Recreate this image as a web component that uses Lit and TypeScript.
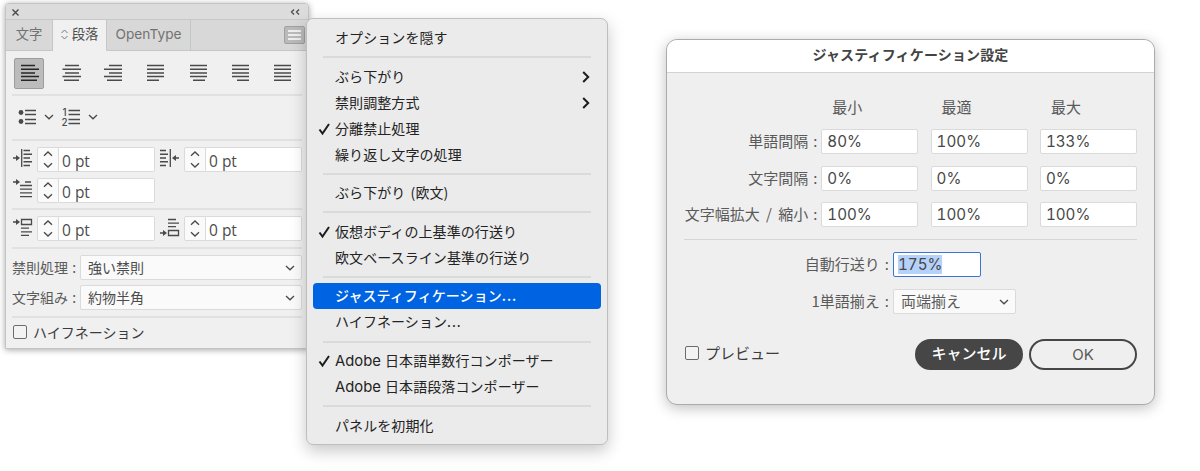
import {html, svg, css, LitElement} from 'lit';
import {customElement, property} from 'lit/decorators.js';
import {classMap} from 'lit/directives/class-map.js';

const shared = css`
  * {
    box-sizing: border-box;
  }

  svg {
    display: block;
    fill: none;
    stroke: #4a4a4a;
    flex: none;
    overflow: visible;
  }

  .head-fill {
    fill: #4a4a4a;
    stroke: none;
  }

  .check {
    width: 14px;
    height: 14px;
    border: 1px solid #6c6c6c;
    border-radius: 2px;
    background: #f3f3f3;
  }

  .select {
    display: flex;
    align-items: center;
    justify-content: space-between;
    height: 25px;
    border: 1px solid #dadada;
    border-radius: 2px;
    background: #fafafa;
    padding: 0 6px 1px 7px;
  }

  .select svg { margin-top: 2px; }
`;

const chevron = html`<svg width="10" height="6" viewBox="0 0 10 6"><path d="M1 1l4 3.8L9 1" stroke-width="1.3"/></svg>`;

// every line is [x1, x2], from top to bottom
const lines = (rows: number[][], top = 1.5, step = 3.7) =>
  rows.map(([a, b], i) => svg`<path d="M${a} ${top + i * step}H${b}"/>`);

const arrow = (y: number) => svg`<path d="M0 ${y}h4"/><path class="head-fill" d="M3 ${y - 3}l4 3-4 3z"/>`;

const ALIGNS = [
  [[1, 15], [1, 19], [1, 15], [1, 19], [1, 17]],
  [[3, 17], [0.5, 19], [3, 17], [0.5, 19], [2, 17]],
  [[5, 18], [0, 18], [5, 18], [0, 18], [3, 18]],
  [[1, 18], [1, 18], [1, 18], [1, 18], [1, 13]],
  [[1, 18], [1, 18], [1, 18], [1, 18], [4, 16]],
  [[1, 18], [1, 18], [1, 18], [1, 18], [6, 18]],
  [[1, 18], [1, 18], [1, 18], [1, 18], [1, 18]],
];

@customElement('w-paragraph-panel')
export class ParagraphPanel extends LitElement {
  static styles = [shared, css`
    :host {
      display: block;
      width: 304px;
      height: 346px;
      background: #f0f0f0;
      border: 1px solid #c4c4c4;
      border-radius: 4px 4px 0 0;
      box-shadow: 0 1px 6px rgba(0,0,0,0.35);
      color: #4c4c4c;
      font: 14px/20px "Noto Sans CJK JP", sans-serif;
      overflow: hidden;
      box-sizing: border-box;
    }

    .title {
      display: flex;
      justify-content: space-between;
      align-items: center;
      height: 15px;
      padding: 1px 8px 0 6px;
      background: #dcdcdc;
    }

    .tabs {
      display: flex;
      height: 32px;
      background: #d8d8d8;
      border-top: 1px solid #c8c8c8;
    }

    .tab {
      display: flex;
      align-items: center;
      justify-content: center;
      padding-bottom: 2px;
      border-right: 1px solid #c6c6c6;
      border-bottom: 1px solid #c6c6c6;
      color: #727272;
      font-size: 13.3px;
    }

    .tab.first { width: 47px; }

    .tab.active {
      width: 54px;
      gap: 4px;
      background: #f0f0f0;
      border-bottom-color: #f0f0f0;
      color: #4c4c4c;
    }

    .tab.active svg { stroke: #777; }

    .tab.latin {
      width: 84px;
      font: 13.7px Inter, sans-serif;
    }

    .tabs .rest {
      flex: 1;
      display: flex;
      justify-content: flex-end;
      padding: 6px 3px 0 0;
      border-bottom: 1px solid #c6c6c6;
    }

    .burger {
      display: flex;
      align-items: center;
      justify-content: center;
      width: 21px;
      height: 18px;
      background: #bababa;
      border: 1px solid #a0a0a0;
      border-radius: 2px;
    }

    .burger svg { stroke: #fff; }

    .body { padding: 7px 6px 0; }

    .aligns {
      display: flex;
      gap: 12.3px;
      padding-left: 2px;
      height: 36px;
    }

    .align {
      display: flex;
      align-items: center;
      justify-content: center;
      width: 30px;
      height: 31px;
      padding-bottom: 2px;
      border: 1px solid transparent;
      border-radius: 2px;
    }

    .align.on {
      background: #bcbcbc;
      border-color: #9c9c9c;
    }

    .align.on svg { stroke: #262626; }

    .line {
      height: 2px;
      margin-bottom: -0.5px;
      background: #e1e1e1;
    }

    .lists {
      display: flex;
      align-items: center;
      gap: 7px;
      height: 43px;
      padding-left: 6px;
    }

    .lists svg:nth-child(3) { margin-left: 1px; }

    .lists text {
      font: 500 9.8px/1 Inter, sans-serif;
      fill: #4a4a4a;
      stroke: none;
    }

    .fields {
      display: grid;
      grid-template-columns: 118px 118px;
      gap: 6px 29px;
      padding: 6.5px 0 5.5px 25px;
    }

    .field {
      display: flex;
      height: 25px;
      margin-left: -25px;
      width: 143px;
    }

    .field .icon {
      width: 25px;
      padding: 1px 0 0 1px;
    }

    .step {
      display: flex;
      align-items: center;
      justify-content: center;
      width: 22px;
      background: #fafafa;
      border: 1px solid #dadada;
      border-radius: 2px 0 0 2px;
    }

    .value {
      flex: 1;
      background: #fff;
      border: 1px solid #dadada;
      border-left: 0;
      border-radius: 0 2px 2px 0;
      padding: 3px 0 0 3px;
      font: 15.5px/20px "Open Sans", sans-serif;
    }

    .selects {
      display: grid;
      grid-template-columns: 68px 1fr;
      row-gap: 5.5px;
      align-items: center;
      padding: 6.5px 0 6px;
    }

    .label {
      color: #5a5a5a;
      padding-bottom: 1px;
      word-spacing: 1px;
      white-space: nowrap;
    }

    .hyphen {
      display: flex;
      align-items: center;
      gap: 6px;
      padding: 5px 1px;
      color: #3c3c3c;
    }

    .hyphen span { margin-top: -1px; }
  `];

  field(icon: unknown) {
    return html`
      <div class="field">
        <div class="icon"><svg width="20" height="20" viewBox="0 0 20 20" stroke-width="1.3">${icon}</svg></div>
        <div class="step"><svg width="10" height="17" viewBox="0 0 10 17" stroke-width="1.3"><path d="M1 4.8L5 1l4 3.8M1 12.2L5 16l4-3.8"/></svg></div>
        <div class="value">0 pt</div>
      </div>
    `;
  }

  render() {
    return html`
      <div class="title">
        <svg width="7" height="7" viewBox="0 0 7 7" stroke-width="1.4"><path d="M.5 .5l6 6M6.5 .5l-6 6"/></svg>
        <svg width="9" height="6" viewBox="0 0 9 6" stroke-width="1.3"><path d="M3 .5L.5 3 3 5.5M8 .5L5.5 3 8 5.5"/></svg>
      </div>
      <div class="tabs">
        <div class="tab first">文字</div>
        <div class="tab active">
          <svg width="7" height="11" viewBox="0 0 7 11" stroke-width="1"><path d="M.5 4L3.5 1l3 3M.5 7l3 3 3-3"/></svg>
          段落
        </div>
        <div class="tab latin">OpenType</div>
        <div class="rest">
          <div class="burger">
            <svg width="13" height="10" viewBox="0 0 13 10" stroke-width="1.3"><path d="M0 1h13M0 5h13M0 9h13"/></svg>
          </div>
        </div>
      </div>
      <div class="body">
        <div class="aligns">
          ${ALIGNS.map((rows, i) => html`
            <div class=${classMap({align: true, on: i === 0})}>
              <svg width="19" height="18" viewBox="0 0 19 18" stroke-width="1.5">${lines(rows)}</svg>
            </div>
          `)}
        </div>
        <div class="line"></div>
        <div class="lists">
          <svg width="19" height="18" viewBox="0 0 19 18" stroke-width="1.4">
            <circle cx="3" cy="4.5" r="2.4" fill="#4a4a4a" stroke="none"/>
            <circle cx="3" cy="13.5" r="2.4" fill="#4a4a4a" stroke="none"/>
            <path d="M7 2.5h11M7 6.5h11M7 11.5h11M7 15.5h11"/>
          </svg>
          ${chevron}
          <svg width="19" height="18" viewBox="0 0 19 18" stroke-width="1.4">
            <text x="0.5" y="7.5">1</text>
            <text x="-0.5" y="17.5">2</text>
            <path d="M6.5 2.5h11.5M6.5 6.5h11.5M6.5 11.5h11.5M6.5 15.5h11.5"/>
          </svg>
          ${chevron}
        </div>
        <div class="line"></div>
        <div class="fields">
          ${this.field(svg`${arrow(10)}<path d="M8.7 1v18"/>${lines([[10.5, 17], [10.5, 19], [10.5, 17], [10.5, 19], [10.5, 17]], 2.5, 3.75)}`)}
          ${this.field(svg`<path d="M19 10h-4M10.3 1v18"/><path class="head-fill" d="M16 7l-4 3 4 3z"/>${lines([[0, 6], [0, 8], [0, 6], [0, 8], [0, 6]], 2.5, 3.75)}`)}
          ${this.field(svg`${arrow(3)}<path d="M12 3h6"/>${lines([[7, 19], [7, 19], [7, 19], [7, 19]], 6.5, 3.7)}`)}
        </div>
        <div class="line"></div>
        <div class="fields">
          ${this.field(svg`${arrow(5)}<path d="M8.5 2.5h10v5h-10z"/>${lines([[8, 16], [8, 19], [8, 16]], 11.2, 3.6)}`)}
          ${this.field(svg`${arrow(16)}<path d="M8.5 13.5h10v5h-10z"/>${lines([[8, 16], [8, 19], [8, 16]], 2.5, 3.6)}`)}
        </div>
        <div class="line"></div>
        <div class="selects">
          <div class="label">禁則処理 :</div>
          <div class="select">強い禁則${chevron}</div>
          <div class="label">文字組み :</div>
          <div class="select">約物半角${chevron}</div>
        </div>
        <div class="line"></div>
        <div class="hyphen"><div class="check"></div><span>ハイフネーション</span></div>
      </div>
    `;
  }
}

interface MenuItem {
  text: string;
  latin?: string;
  checked?: boolean;
  sub?: boolean;
  active?: boolean;
  dots?: boolean;
}

const MENU: MenuItem[][] = [
  [{text: 'オプションを隠す'}],
  [
    {text: 'ぶら下がり', sub: true},
    {text: '禁則調整方式', sub: true},
    {text: '分離禁止処理', checked: true},
    {text: '繰り返し文字の処理'},
  ],
  [{text: 'ぶら下がり (欧文)'}],
  [
    {text: '仮想ボディの上基準の行送り', checked: true},
    {text: '欧文ベースライン基準の行送り'},
  ],
  [
    {text: 'ジャスティフィケーション', dots: true, active: true},
    {text: 'ハイフネーション', dots: true},
  ],
  [
    {latin: 'Adobe', text: '日本語単数行コンポーザー', checked: true},
    {latin: 'Adobe', text: '日本語段落コンポーザー'},
  ],
  [{text: 'パネルを初期化'}],
];

@customElement('w-option-menu')
export class OptionMenu extends LitElement {
  @property({attribute: false}) public groups: MenuItem[][] = MENU;

  static styles = [shared, css`
    :host {
      display: block;
      width: 302px;
      height: 427px;
      padding: 6px;
      background: #ebebeb;
      border: 1px solid #bebebe;
      border-radius: 7px;
      box-shadow: 0 6px 16px rgba(0,0,0,0.22);
      color: #232323;
      font: 14px/24px "Noto Sans CJK JP", sans-serif;
      letter-spacing: 0.08px;
      box-sizing: border-box;
    }

    .group + .group::before {
      content: '';
      display: block;
      height: 2px;
      margin: 5.3px 10px;
      background: #dadada;
    }

    .item {
      display: flex;
      align-items: center;
      height: 26px;
      padding-right: 11px;
      border-radius: 4px;
      white-space: pre;
    }

    .item.active {
      background: #0063e1;
      color: #fff;
      font-weight: 500;
    }

    .mark {
      width: 22px;
      padding-left: 5px;
    }

    .latin {
      font: 14.8px/26px Inter, sans-serif;
      letter-spacing: 0;
      width: 50px;
    }

    .text {
      flex: 1;
      padding-bottom: 2px;
      word-spacing: 2px;
    }

    .dots { letter-spacing: 0.9px; }

    svg { stroke: #1c1c1c; }
  `];

  render() {
    return html`
      ${this.groups.map(group => html`
        <div class="group">
          ${group.map(item => html`
            <div class=${classMap({item: true, active: !!item.active})}>
              <div class="mark">
                ${item.checked ? html`<svg width="13" height="12" viewBox="0 0 13 12" stroke-width="2"><path d="M1.5 6.5l3 4L11 1"/></svg>` : null}
              </div>
              ${item.latin ? html`<div class="latin">${item.latin}</div>` : null}
              <div class="text">${item.text}${item.dots ? html`<span class="dots">...</span>` : null}</div>
              ${item.sub ? html`<svg width="8" height="12" viewBox="0 0 8 12" stroke-width="2"><path d="M1.2 1l5 5-5 5"/></svg>` : null}
            </div>
          `)}
        </div>
      `)}
    `;
  }
}

@customElement('w-justify-dialog')
export class JustifyDialog extends LitElement {
  static styles = [shared, css`
    :host {
      display: block;
      width: 489px;
      height: 366px;
      background: #efefef;
      border: 1px solid #ababab;
      border-radius: 11px;
      box-shadow: 0 3px 14px rgba(0,0,0,0.25);
      color: #5a5a5a;
      font: 15px/23px "Noto Sans CJK JP", sans-serif;
      overflow: hidden;
      box-sizing: border-box;
    }

    .title {
      height: 33px;
      background: #fff;
      border-bottom: 1px solid #d2d2d2;
      color: #434343;
      font-size: 14px;
      font-weight: 700;
      line-height: 29px;
      letter-spacing: 0.15px;
      text-align: center;
    }

    .body { padding: 21px 17px 0; }

    .grid {
      display: grid;
      grid-template-columns: 125px 97px 97px 97px;
      column-gap: 12.3px;
      row-gap: 11.5px;
      padding-bottom: 12px;
    }

    .grid .head {
      height: 23.5px;
      line-height: 25px;
      padding-left: 11px;
    }

    .grid .label { margin-right: -8.5px; }

    .label {
      display: flex;
      justify-content: flex-end;
      gap: 5px;
      white-space: nowrap;
      word-spacing: 3px;
    }

    .input {
      height: 25px;
      border: 1px solid #dadada;
      border-radius: 2px;
      background: #fff;
      color: #474747;
      padding-left: 5px;
      font: 15.2px/24px Inter, sans-serif;
      font-feature-settings: "tnum";
    }

    .input.focus {
      width: 88px;
      border: 1.5px solid #3d72d8;
      padding: 2px 0 0 4px;
      line-height: 19px;
    }

    .input.focus span {
      display: inline-block;
      height: 19px;
      background: #b5d2fb;
    }

    .line {
      height: 1px;
      background: #d6d6d6;
    }

    .rows {
      display: grid;
      grid-template-columns: 205px auto;
      justify-content: start;
      gap: 11.5px 4px;
      padding-top: 12px;
    }

    .rows .select { width: 123px; }

    .foot {
      display: flex;
      align-items: center;
      gap: 6px;
      padding-top: 25px;
    }

    .preview {
      display: flex;
      align-items: center;
      gap: 6px;
      flex: 1;
      padding: 0 0 3px 1px;
      color: #3c3c3c;
    }

    .preview span { margin-top: -1px; }

    .button {
      width: 108px;
      height: 31px;
      border: 2px solid #464646;
      border-radius: 16px;
      text-align: center;
      line-height: 27px;
      font-family: Inter, "Noto Sans CJK JP", sans-serif;
    }

    .button.dark {
      background: #464646;
      color: #fff;
      font-weight: 500;
      line-height: 26px;
    }
  `];

  rows = [
    {name: '単語間隔', values: ['80%', '100%', '133%']},
    {name: '文字間隔', values: ['0%', '0%', '0%']},
    {name: '文字幅拡大 / 縮小', values: ['100%', '100%', '100%']},
  ];

  render() {
    return html`
      <div class="title">ジャスティフィケーション設定</div>
      <div class="body">
        <div class="grid">
          <div></div>
          <div class="head">最小</div>
          <div class="head">最適</div>
          <div class="head">最大</div>
          ${this.rows.map(row => html`
            <div class="label"><span>${row.name}</span><span>:</span></div>
            ${row.values.map(value => html`<div class="input">${value}</div>`)}
          `)}
        </div>
        <div class="line"></div>
        <div class="rows">
          <div class="label"><span>自動行送り</span><span>:</span></div>
          <div class="input focus"><span>175%</span></div>
          <div class="label"><span>1単語揃え</span><span>:</span></div>
          <div class="select">両端揃え${chevron}</div>
        </div>
        <div class="foot">
          <div class="preview"><div class="check"></div><span>プレビュー</span></div>
          <div class="button dark">キャンセル</div>
          <div class="button">OK</div>
        </div>
      </div>
    `;
  }
}

@customElement('app-root')
export class AppRoot extends LitElement {
  static styles = css`
    :host {
      display: block;
      position: relative;
      height: 471px;
      background: #fff;
      overflow: hidden;
    }

    .window { position: absolute; }

    .panel { left: 5px; top: 3px; }

    .menu { left: 306px; top: 18px; }

    .dialog { left: 666px; top: 39px; }
  `;

  render() {
    return html`
      <w-paragraph-panel class="window panel"></w-paragraph-panel>
      <w-option-menu class="window menu"></w-option-menu>
      <w-justify-dialog class="window dialog"></w-justify-dialog>
    `;
  }
}
